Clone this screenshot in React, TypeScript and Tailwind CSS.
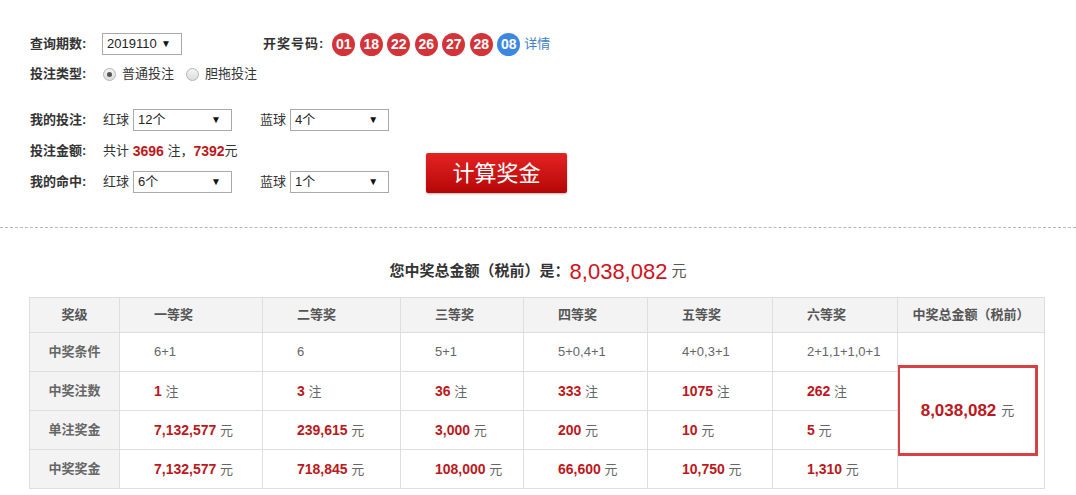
import React from "react";

const balls = ["01", "18", "22", "26", "27", "28"];

const levels = ["一等奖", "二等奖", "三等奖", "四等奖", "五等奖", "六等奖"];
const conditions = ["6+1", "6", "5+1", "5+0,4+1", "4+0,3+1", "2+1,1+1,0+1"];
const counts = ["1", "3", "36", "333", "1075", "262"];
const singlePrize = ["7,132,577", "239,615", "3,000", "200", "10", "5"];
const totalPrize = ["7,132,577", "718,845", "108,000", "66,600", "10,750", "1,310"];

function FakeSelect({ value, width }: { value: string; width: string }) {
  return (
    <div
      className={`${width} flex h-[22px] items-center justify-between border border-[#a9a9a9] bg-white pl-[4px] pr-[10px] text-[13px] text-[#222]`}
    >
      <span>{value}</span>
      <span className="text-[10px] leading-none text-[#111]">▼</span>
    </div>
  );
}

function Radio({ checked }: { checked?: boolean }) {
  return (
    <span className="flex h-[13px] w-[13px] items-center justify-center rounded-full border border-[#b4b4b4] bg-gradient-to-b from-[#f4f4f4] to-[#dcdcdc]">
      {checked && <span className="h-[5px] w-[5px] rounded-full bg-[#555]" />}
    </span>
  );
}

function Red({ children }: { children: React.ReactNode }) {
  return <span className="text-[14px] font-bold text-[#bb1820]">{children}</span>;
}

export default function App() {
  return (
    <div className="h-[495px] w-[1076px] overflow-hidden bg-white font-['Liberation_Sans','Noto_Sans_CJK_SC',sans-serif] text-[13px] text-[#333]">
      {/* Query form */}
      <div className="pl-[30px] pt-[33px]">
        <div className="flex h-[22px] items-center">
          <span className="w-[72px] font-bold">查询期数:</span>
          <FakeSelect value="2019110" width="w-[80px]" />
          <span className="ml-[81px] font-bold tracking-[1px]">开奖号码:</span>
          <div className="ml-[8px] flex items-center gap-[4.5px]">
            {balls.map((b) => (
              <span
                key={b}
                className="flex h-[23px] w-[23px] items-center justify-center rounded-full bg-[#d3343a] text-[14px] font-bold text-white"
              >
                {b}
              </span>
            ))}
            <span className="flex h-[23px] w-[23px] items-center justify-center rounded-full bg-[#3c88e0] text-[14px] font-bold text-white">
              08
            </span>
          </div>
          <span className="ml-[4px] text-[#3f7fc6]">详情</span>
        </div>

        <div className="mt-[8px] flex h-[22px] items-center">
          <span className="w-[73px] font-bold">投注类型:</span>
          <Radio checked />
          <span className="ml-[6px]">普通投注</span>
          <span className="ml-[12px]">
            <Radio />
          </span>
          <span className="ml-[6px]">胆拖投注</span>
        </div>

        <div className="mt-[24px] flex items-end">
          <div className="flex flex-col gap-[9px]">
            <div className="flex h-[22px] items-center">
              <span className="w-[73px] font-bold">我的投注:</span>
              <span>红球</span>
              <span className="ml-[4px]">
                <FakeSelect value="12个" width="w-[99px]" />
              </span>
              <span className="ml-[28px]">蓝球</span>
              <span className="ml-[4px]">
                <FakeSelect value="4个" width="w-[99px]" />
              </span>
            </div>
            <div className="flex h-[22px] items-center">
              <span className="w-[73px] font-bold">投注金额:</span>
              <span>共计&nbsp;</span>
              <Red>3696</Red>
              <span>&nbsp;注，</span>
              <Red>7392</Red>
              <span>元</span>
            </div>
            <div className="flex h-[22px] items-center">
              <span className="w-[73px] font-bold">我的命中:</span>
              <span>红球</span>
              <span className="ml-[4px]">
                <FakeSelect value="6个" width="w-[99px]" />
              </span>
              <span className="ml-[28px]">蓝球</span>
              <span className="ml-[4px]">
                <FakeSelect value="1个" width="w-[99px]" />
              </span>
            </div>
          </div>
          <button className="ml-[37px] flex h-[40px] w-[141px] items-center justify-center rounded-[2px] bg-gradient-to-b from-[#e42222] to-[#b60505] text-[22px] text-white shadow-[0_1px_2px_rgba(0,0,0,0.3)]">
            计算奖金
          </button>
        </div>
      </div>

      {/* Divider */}
      <div className="mt-[34px] border-t border-dashed border-[#b8b8b8]" />

      {/* Summary */}
      <div className="mt-[31px] flex h-[24px] items-center justify-center">
        <span className="text-[15px] font-bold text-[#333]">您中奖总金额（税前）是：</span>
        <span className="text-[22px] text-[#cf121b]">8,038,082</span>
        <span className="ml-[4px] text-[15px] text-[#555]">元</span>
      </div>

      {/* Prize table */}
      <table className="ml-[29px] mt-[14px] w-[1015px] table-fixed border-collapse text-[13px]">
        <colgroup>
          <col className="w-[90px]" />
          <col className="w-[143px]" />
          <col className="w-[138px]" />
          <col className="w-[123px]" />
          <col className="w-[124px]" />
          <col className="w-[125px]" />
          <col className="w-[125px]" />
          <col className="w-[147px]" />
        </colgroup>
        <thead>
          <tr className="h-[35px] bg-[#f3f3f3]">
            <th className="border border-[#dedede] text-center font-bold text-[#555]">奖级</th>
            {levels.map((l) => (
              <th key={l} className="border border-[#dedede] pl-[34px] text-left font-bold text-[#555]">
                {l}
              </th>
            ))}
            <th className="border border-[#dedede] text-center font-bold text-[#555]">中奖总金额（税前）</th>
          </tr>
        </thead>
        <tbody>
          <tr className="h-[39px]">
            <td className="border border-[#dedede] bg-[#f3f3f3] text-center font-bold text-[#666]">中奖条件</td>
            {conditions.map((c, i) => (
              <td key={i} className="border border-[#dedede] pl-[34px] text-[#666]">
                {c}
              </td>
            ))}
            <td rowSpan={4} className="border border-[#dedede] p-0 align-middle">
              <div className="-ml-[1px] flex h-[91px] w-[141px] items-center justify-center border-[3px] border-[#d54246]">
                <span className="text-[17px] font-bold text-[#bb1820]">8,038,082</span>
                <span className="ml-[5px] text-[13px] text-[#666]">元</span>
              </div>
            </td>
          </tr>
          <tr className="h-[39px]">
            <td className="border border-[#dedede] bg-[#f3f3f3] text-center font-bold text-[#666]">中奖注数</td>
            {counts.map((c, i) => (
              <td key={i} className="border border-[#dedede] pl-[34px] text-[#666]">
                <Red>{c}</Red> 注
              </td>
            ))}
          </tr>
          <tr className="h-[39px]">
            <td className="border border-[#dedede] bg-[#f3f3f3] text-center font-bold text-[#666]">单注奖金</td>
            {singlePrize.map((c, i) => (
              <td key={i} className="border border-[#dedede] pl-[34px] text-[#666]">
                <Red>{c}</Red> 元
              </td>
            ))}
          </tr>
          <tr className="h-[39px]">
            <td className="border border-[#dedede] bg-[#f3f3f3] text-center font-bold text-[#666]">中奖奖金</td>
            {totalPrize.map((c, i) => (
              <td key={i} className="border border-[#dedede] pl-[34px] text-[#666]">
                <Red>{c}</Red> 元
              </td>
            ))}
          </tr>
        </tbody>
      </table>
    </div>
  );
}
